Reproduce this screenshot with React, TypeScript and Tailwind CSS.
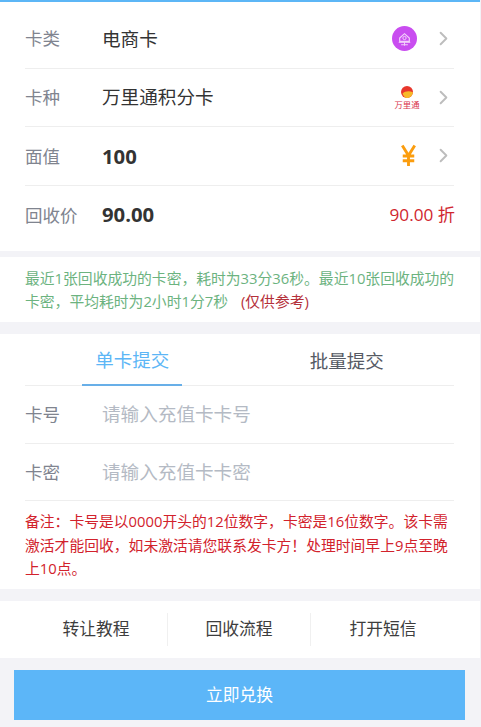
import React from "react";
import { ChevronRight } from "lucide-react";

const font = "font-['Open_Sans','Noto_Sans_CJK_SC',sans-serif]";

const Row: React.FC<{ label: string; h?: string; last?: boolean; children: React.ReactNode }> = ({ label, h = "h-[58.7px]", last, children }) => (
  <div className={`flex items-center ${h} ${last ? "" : "border-b border-[#eeeeee]"}`}>
    <span className="w-[77px] shrink-0 text-[17.5px] text-[#80848f]">{label}</span>
    {children}
  </div>
);

const Arrow = () => <ChevronRight size={23} strokeWidth={2} className="mr-[-1px] ml-[15px] shrink-0 text-[#bdbdbd]" />;

const ShopIcon = () => (
  <svg width="25" height="25" viewBox="0 0 26 26">
    <circle cx="13" cy="13" r="13" fill="#c94df0" />
    <path d="M8 12.5 13 8l5 4.500V16H8z" fill="none" stroke="#f3d2fb" strokeWidth="1.200" />
    <circle cx="13" cy="12.500" r="1.700" fill="none" stroke="#f3d2fb" strokeWidth="1" />
    <path d="M7 17h12M9.500 19.500h7M13 17v3.500" stroke="#f3d2fb" strokeWidth="1" />
  </svg>
);

const WanliIcon = () => (
  <div className="mr-[-3px] flex w-[26px] flex-col items-center">
    <svg width="12" height="12" viewBox="0 0 12 12">
      <circle cx="6" cy="6" r="6" fill="#e8362c" />
      <path d="M1.500 7.500C4 5 8 4.500 12 6.200 11.600 9.500 9 12 6 12 4 12 2.400 10 1.500 7.500z" fill="#f7b928" />
    </svg>
    <span className="mt-[2px] text-[8.300px] leading-[9px] whitespace-nowrap text-[#d8324a]">万里通</span>
  </div>
);

const YenIcon = () => (
  <svg width="17" height="23" viewBox="0 0 16 24">
    <path d="M1.500 1.500 8 12l6.500-10.500M8 12v11M2 12.500h12M2 17.500h12" fill="none" stroke="#fb9d0e" strokeWidth="3" />
  </svg>
);

export default function App() {
  return (
    <div className={`${font} h-[727px] w-[481px] overflow-hidden bg-[#f3f3f7]`}>
      <div className="w-[480px]">
        <div className="h-[2px] bg-[#5cb6f6]" />

        <div className="bg-white pt-[7.500px] pr-[26px] pb-[7.400px] pl-[25px]">
          <Row label="卡类" h="h-[59px]">
            <span className="flex-1 text-[18.600px] text-[#333333]">电商卡</span>
            <ShopIcon />
            <Arrow />
          </Row>
          <Row label="卡种">
            <span className="flex-1 text-[18.600px] text-[#333333]">万里通积分卡</span>
            <WanliIcon />
            <Arrow />
          </Row>
          <Row label="面值" h="h-[58.500px]">
            <span className="flex-1 text-[20.300px] font-bold text-[#333333]">100</span>
            <YenIcon />
            <Arrow />
          </Row>
          <Row label="回收价" h="h-[58px]" last>
            <span className="flex-1 text-[20.300px] font-bold text-[#333333]">90.00</span>
            <span className="mr-[-1px] text-[17.200px] text-[#d0262f]">90.00 折</span>
          </Row>
        </div>

        <div className="mt-[6px] bg-white px-[25px] pt-[10px] pb-[9px] text-[14.800px] leading-[23px] text-[#6cb37f]">
          最近1张回收成功的卡密，耗时为33分36秒。最近10张回收成功的卡密，平均耗时为2小时1分7秒
          <span className="ml-[13px] text-[#b5303a]">(仅供参考)</span>
        </div>

        <div className="mt-[12px] bg-white pr-[26px] pb-[8px] pl-[25px]">
          <div className="flex h-[52px] border-b border-[#eeeeee] text-[18.500px]">
            <div className="flex flex-1 justify-center">
              <div className="mb-[-1px] flex w-[100px] items-center justify-center border-b-2 border-[#68afe8] pt-[2px] text-[#5cb6f6]">单卡提交</div>
            </div>
            <div className="flex flex-1 items-center justify-center pt-[2px] text-[#555a64]">批量提交</div>
          </div>
          <Row label="卡号" h="h-[57.500px]">
            <input placeholder="请输入充值卡卡号" className="flex-1 text-[18.600px] outline-none placeholder:text-[#b4bac4]" />
          </Row>
          <Row label="卡密" h="h-[57.500px]">
            <input placeholder="请输入充值卡卡密" className="flex-1 text-[18.600px] outline-none placeholder:text-[#b4bac4]" />
          </Row>
          <p className="mt-[9px] text-[14.800px] leading-[23.500px] text-[#d2222c]">
            备注：卡号是以0000开头的12位数字，卡密是16位数字。该卡需激活才能回收，如未激活请您联系发卡方！处理时间早上9点至晚上10点。
          </p>
        </div>

        <div className="mt-[12px] flex h-[57px] items-center bg-white px-[25px] text-[16.800px] text-[#3d3d3d]">
          <div className="flex h-[33px] w-[143px] items-center justify-center border-r border-[#f0f0f0]">转让教程</div>
          <div className="flex h-[33px] w-[143px] items-center justify-center border-r border-[#f0f0f0]">回收流程</div>
          <div className="flex h-[33px] w-[144px] items-center justify-center">打开短信</div>
        </div>

        <button className="mx-[14px] mt-[12px] flex h-[50px] w-[451px] items-center justify-center bg-[#5cb6f8] text-[16.800px] text-white">
          立即兑换
        </button>
      </div>
    </div>
  );
}
